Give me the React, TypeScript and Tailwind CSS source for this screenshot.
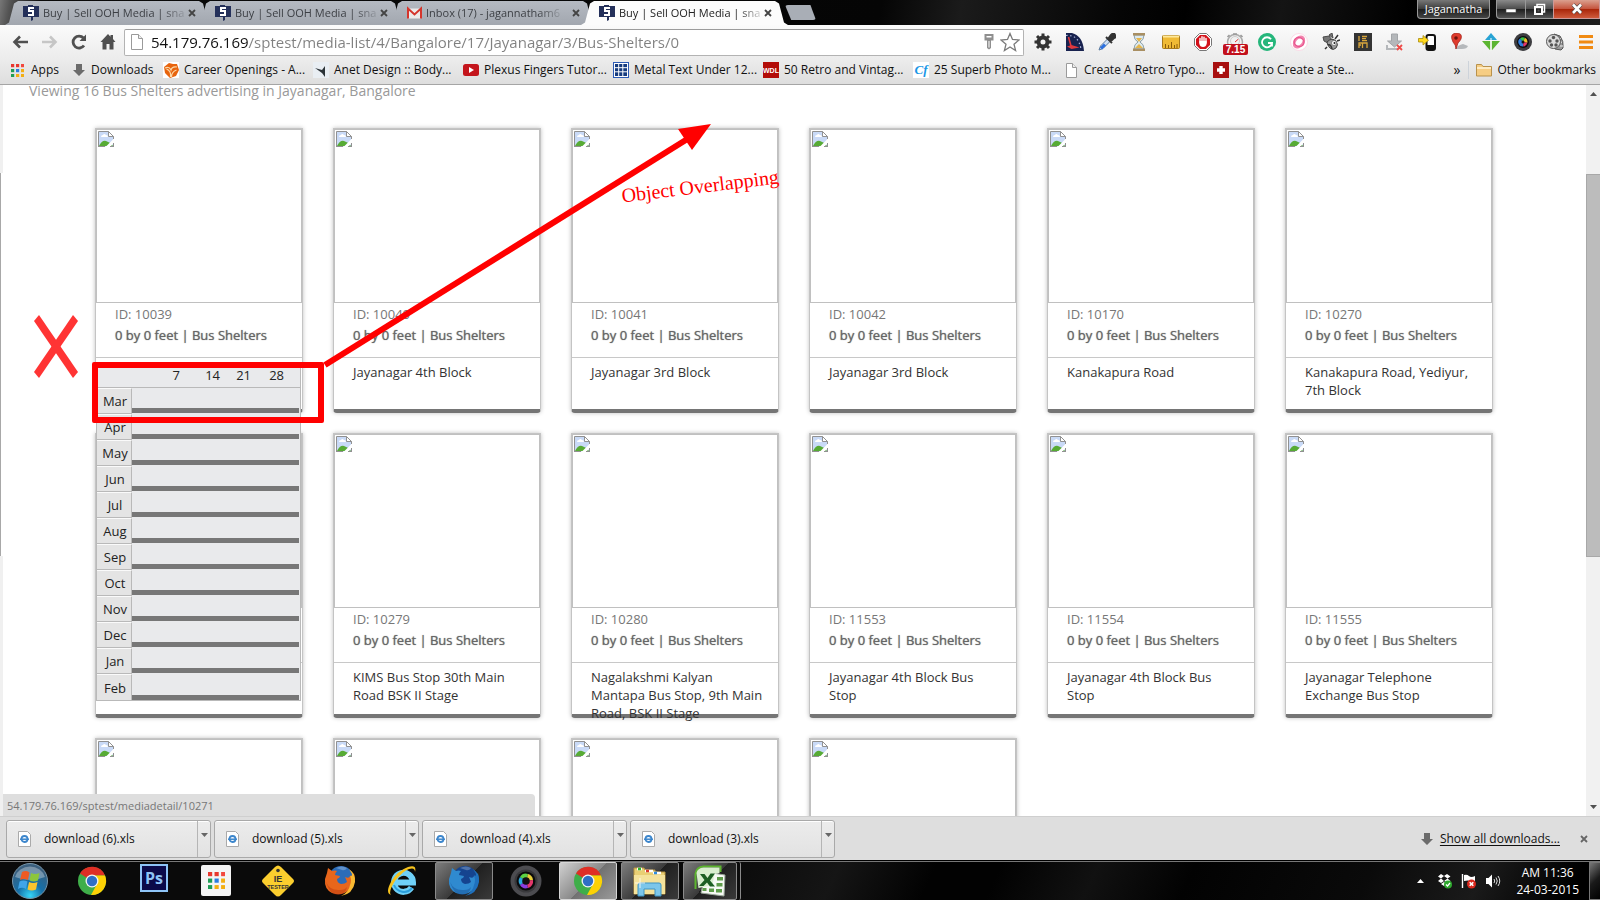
import React from "react";

type Box = { children: React.ReactNode; size?: number; view?: string; className?: string };

function Svg({ children, size = 18, view = "0 0 18 18", className = "" }: Box) {
  return (
    <svg width={size} height={size} viewBox={view} className={`block shrink-0 ${className}`} aria-hidden="true">
      {children}
    </svg>
  );
}

/* ---------- Browser tabs ---------- */

function SiteIcon() {
  return (
    <Svg size={16} view="0 0 16 16">
      <path d="M0 1h5v-1h5v1h6v11h-6v3l-2 1v-4H0z" fill="#24305a" />
      <path d="M11 3H6v3h4v4H5" fill="none" stroke="#fff" strokeWidth="2" />
    </Svg>
  );
}

function GmailIcon() {
  return (
    <Svg size={15} view="0 0 15 12">
      <path d="M1 1h13v10H1z" fill="#eceaea" />
      <path d="M1 11V1l6.5 6L14 1v10" fill="none" stroke="#d5352c" strokeWidth="2" />
    </Svg>
  );
}

const tabs = [
  { title: "Buy | Sell OOH Media | sna", icon: "site", active: false },
  { title: "Buy | Sell OOH Media | sna", icon: "site", active: false },
  { title: "Inbox (17) - jagannatham6", icon: "mail", active: false },
  { title: "Buy | Sell OOH Media | sna", icon: "site", active: true },
];

function CloseX({ color = "#444" }: { color?: string }) {
  return (
    <Svg size={8} view="0 0 8 8">
      <path d="M1 1l6 6M7 1L1 7" stroke={color} strokeWidth="1.8" />
    </Svg>
  );
}

function TabStrip() {
  return (
    <header className="flex h-[25px] shrink-0 items-end bg-[linear-gradient(100deg,#777_0,#555_10px,#0a0a0a_40px,#050505_55%,#1b1b1b_60%,#050505_70%,#000_74%,#141414_80%,#000_88%,#1c1c1c_100%)] pl-[5px]">
      {tabs.map((t, i) => (
        <div
          key={i}
          className={
            "-mr-[15px] flex h-[24px] w-[207px] items-center pr-[16px] pl-[18px] [clip-path:polygon(0_100%,4px_90%,9px_10%,13px_0,194px_0,198px_10%,203px_90%,100%_100%)] " +
            (t.active ? "z-10 bg-[#fcfcfc]" : "bg-[linear-gradient(#b5bac2,#a2a7af)]")
          }
        >
          {t.icon === "site" ? <SiteIcon /> : <GmailIcon />}
          <span
            className={
              "ml-[4px] text-[11px] leading-4 whitespace-nowrap [mask-image:linear-gradient(90deg,#000_84%,rgba(0,0,0,0.2)_100%)] " +
              (t.active ? "text-[#222]" : "text-[#3c3f44]")
            }
          >
            {t.title}
          </span>
          <button aria-label="Close tab" className="ml-auto">
            <CloseX />
          </button>
        </div>
      ))}
      <button
        aria-label="New tab"
        className="mb-[5px] ml-[12px] h-[15px] w-[31px] rounded-[3px] bg-[#a9aeb6] [clip-path:polygon(0_0,82%_0,100%_100%,20%_100%)]"
      />
      <div className="ml-auto flex h-[19px] self-start">
        <button className="mr-[6px] w-[73px] rounded-b-[4px] border border-t-0 border-[#999] bg-[linear-gradient(#777,#3a3a3a_50%,#1c1c1c_50%,#444)] text-[11px] leading-4 text-white">
          Jagannatha
        </button>
        <button
          aria-label="Minimise"
          className="flex w-[30px] items-center justify-center rounded-bl-[4px] border border-t-0 border-[#999] bg-[linear-gradient(#8a8a8a,#4a4a4a_50%,#1c1c1c_50%,#555)]"
        >
          <Svg size={12} view="0 0 12 12">
            <path d="M1 6h10v3.5H1z" fill="#fff" stroke="#444" strokeWidth=".6" />
          </Svg>
        </button>
        <button
          aria-label="Restore"
          className="flex w-[27px] items-center justify-center border-b border-[#999] bg-[linear-gradient(#8a8a8a,#4a4a4a_50%,#1c1c1c_50%,#555)]"
        >
          <Svg size={13} view="0 0 13 13">
            <path d="M4 3V1.5h7.5V9H10" fill="none" stroke="#fff" strokeWidth="1.5" />
            <path d="M2 4h7v7H2z" fill="none" stroke="#fff" strokeWidth="2" />
            <path d="M4.500 6.500h2v2h-2z" fill="#555" />
          </Svg>
        </button>
        <button
          aria-label="Close"
          className="flex w-[47px] items-center justify-center border border-t-0 border-[#c99] bg-[linear-gradient(#dba08f,#c4523b_50%,#a82408_50%,#cf5a3c)]"
        >
          <Svg size={12} view="0 0 12 12">
            <path d="M2 1.500l8 8.500M10 1.500L2 10" stroke="#444" strokeWidth="4" />
            <path d="M2 1.500l8 8.500M10 1.500L2 10" stroke="#fff" strokeWidth="2.600" />
          </Svg>
        </button>
      </div>
    </header>
  );
}

/* ---------- Toolbar ---------- */

const extensions: { name: string; art: React.ReactNode }[] = [
  {
    name: "Settings",
    art: (
      <>
        <circle cx="9" cy="9" r="4.500" fill="none" stroke="#333" strokeWidth="4" />
        <path d="M9 0.500v3M9 14.500v3M0.500 9h3M14.500 9h3M3 3l2 2M13 13l2 2M3 15l2-2M13 5l2-2" stroke="#333" strokeWidth="3" />
      </>
    ),
  },
  {
    name: "Page speed",
    art: (
      <>
        <path d="M0 0h6q11 3 12 18H0z" fill="#18224f" />
        <path d="M0 2.500q13-1 15 14" fill="none" stroke="#aeb8dd" strokeWidth="1.200" strokeDasharray="1.500 2.500" />
        <path d="M2.500 4L5 13" stroke="#e0393e" strokeWidth="1.600" />
        <path d="M1 13.500l4.500-1.500 8 2.500-8 1.500z" fill="#e0393e" />
      </>
    ),
  },
  {
    name: "Eyedropper",
    art: (
      <>
        <path d="M1 17l1.500-4 7-7 2.500 2.500-7 7z" fill="#cfe0f4" stroke="#56789f" />
        <path d="M3 15.500l4-4" stroke="#2b6fe0" strokeWidth="3" />
        <path d="M8 4l6 6M10 6l3-4q3-3 4 0t-1 3l-3 3z" fill="#333" stroke="#333" strokeWidth="2" />
      </>
    ),
  },
  {
    name: "Hourglass",
    art: (
      <>
        <path d="M4 2h10q0 5-4 7 4 2 4 7H4q0-5 4-7-4-2-4-7z" fill="#dce9ee" stroke="#8da0a8" />
        <path d="M6 5h6l-3 4zM5 15l4-4 4 4z" fill="#e5b54a" />
        <path d="M3 0h12v2.500H3zM3 15.500h12V18H3z" fill="#a98f62" />
      </>
    ),
  },
  {
    name: "Ruler",
    art: (
      <>
        <rect x="0.500" y="2.500" width="17" height="13" rx="1" fill="#efba35" stroke="#a77a1c" />
        <path d="M1 3.500h16" stroke="#ffe89a" strokeWidth="2" />
        <path d="M3.500 15v-4M6.500 15v-3M9.500 15V9M12.500 15v-3M15 15v-4" stroke="#8c5e0c" />
      </>
    ),
  },
  {
    name: "Blocker",
    art: (
      <>
        <path d="M5.500 0.500h7l5 5v7l-5 5h-7l-5-5v-7z" fill="#fff" stroke="#777" />
        <path d="M6 2h6l4 4v6l-4 4H6l-4-4V6z" fill="#d3121b" />
        <path d="M6 10V5.500M8 9V3.800M10 9V4.200M12 10V5.500" stroke="#fff" strokeWidth="1.400" strokeLinecap="round" />
        <path d="M5.400 8h7.200v3q-.5 3-3.600 3T5.400 11z" fill="#fff" />
      </>
    ),
  },
  {
    name: "Load timer",
    art: (
      <>
        <circle cx="9" cy="9" r="7.500" fill="#f1f1f1" stroke="#aaa" strokeWidth="1.500" />
        <path d="M7 1h4M1.500 4l2-2M16.500 4l-2-2" stroke="#999" strokeWidth="1.600" />
        <path d="M9 9l3.500-3" stroke="#d33" />
        <circle cx="9" cy="8" r="4.500" fill="none" stroke="#ccc" />
      </>
    ),
  },
  {
    name: "Grammar",
    art: (
      <>
        <circle cx="9" cy="9" r="9" fill="#25b67b" />
        <path d="M13 6.200A5 5 0 1 0 14 10h-4M14 10v3.500" fill="none" stroke="#fff" strokeWidth="1.800" />
      </>
    ),
  },
  {
    name: "Petal",
    art: (
      <>
        <circle cx="9" cy="9" r="8.500" fill="#fff" stroke="#fbdbe7" />
        <ellipse cx="9" cy="9" rx="6" ry="4" fill="none" stroke="#f283ad" strokeWidth="2.500" transform="rotate(-50 9 9)" />
        <ellipse cx="9" cy="9" rx="5" ry="4.500" fill="none" stroke="#e9568f" strokeWidth="1.300" transform="rotate(20 9 9)" />
      </>
    ),
  },
  {
    name: "Firebug",
    art: (
      <>
        <path d="M1 4l6-1 3 4-4 3-4-2zM7 2l3-2 1 5z" fill="#777" stroke="#4a4a4a" />
        <path d="M5 9q5-5 9-1 3 4 0 7t-6 0q-3-3-3-6z" fill="#9a9a9a" stroke="#444" />
        <path d="M6 12q3-1 4 4M5 14l-2 2M13 6l3-4M15 8l3-1" fill="none" stroke="#333" strokeWidth="1.500" />
        <circle cx="12" cy="10" r="2.600" fill="#f4f4f4" stroke="#555" strokeWidth=".6" />
        <circle cx="12.500" cy="10" r="1" fill="#222" />
      </>
    ),
  },
  {
    name: "Markup",
    art: (
      <>
        <rect width="18" height="18" fill="#343434" />
        <path d="M5 3v5M8 3.500h5M8 5.600h4M8 7.700h5M5 15v-5h3.500v5M8.500 10H13v5M5 12h2" fill="none" stroke="#d9a63c" strokeWidth="1.300" />
      </>
    ),
  },
  {
    name: "Download manager",
    art: (
      <>
        <path d="M5.500 1h6v7h4l-7 6-7-6h4z" fill="#b4b7ba" stroke="#a2a5a8" />
        <path d="M1 12v4h11" fill="none" stroke="#b4b7ba" strokeWidth="2" />
        <path d="M11 12l5 5M16 12l-5 5" stroke="#ee4b48" strokeWidth="1.800" />
      </>
    ),
  },
  {
    name: "Send to phone",
    art: (
      <>
        <rect x="8.500" y="2" width="8.500" height="15" rx="2" fill="#fff" stroke="#111" strokeWidth="2" />
        <path d="M9 12h8v4H9z" fill="#111" />
        <path d="M.5 5.500H5v-3l5.500 4.800L5 12V9H.5z" fill="#ffd91c" stroke="#a98b0a" strokeWidth=".8" />
      </>
    ),
  },
  {
    name: "Map pin",
    art: (
      <>
        <path d="M5 16q3-4 8-5l5 2q-1 3-6 3z" fill="#b5b8bb" />
        <path d="M6 16q0-4-3-7-4-8 3-9 7 0 5 6-1 2-3 4-1 3-2 6z" fill="#df3b2d" stroke="#9e2118" strokeWidth=".7" />
        <circle cx="6" cy="5" r="1.800" fill="#6d130d" />
      </>
    ),
  },
  {
    name: "Feather",
    art: (
      <>
        <path d="M9 0l6 7H3z" fill="#28a3d4" />
        <path d="M0 8h8.300v9.500zM18 8H9.700v9.500z" fill="#5cb531" />
        <path d="M8.500 5h1v13h-1z" fill="#fff" />
      </>
    ),
  },
  {
    name: "Lens",
    art: (
      <>
        <circle cx="9" cy="9" r="9" fill="#3d3d40" />
        <circle cx="9" cy="9" r="6" fill="#0c0c0e" />
        <path d="M9 9L6 5.500a4.500 4.500 0 0 1 5-.8z" fill="#37c24a" />
        <path d="M9 9l2-4.300a4.500 4.500 0 0 1 2.300 5z" fill="#f1bd26" />
        <path d="M9 9l4.300.8a4.500 4.500 0 0 1-4 3.700z" fill="#e3356c" />
        <path d="M9 9l.2 4.500A4.500 4.500 0 0 1 6 5.500z" fill="#2f7fe0" />
        <circle cx="9" cy="9" r="1.500" fill="#111" />
      </>
    ),
  },
  {
    name: "Film",
    art: (
      <>
        <path d="M8 1l6 2q4 5 3 12l-2 2-6-1z" fill="#999" stroke="#555" />
        <path d="M15 5l-2 2M16 9l-2 1M17 13l-3 0" stroke="#eee" />
        <circle cx="7.500" cy="8.500" r="7" fill="#dcdcdc" stroke="#555" />
        <circle cx="7.500" cy="4.500" r="1.700" fill="#555" />
        <circle cx="4" cy="8" r="1.700" fill="#555" />
        <circle cx="11" cy="8" r="1.700" fill="#555" />
        <circle cx="5.500" cy="12" r="1.700" fill="#555" />
        <circle cx="10" cy="12" r="1.700" fill="#555" />
      </>
    ),
  },
];

function PageIcon() {
  return (
    <Svg size={16} view="0 0 16 16">
      <path d="M2.500.5h7l4 4v11h-11z" fill="#fff" stroke="#9a9a9a" />
      <path d="M9.500.5v4h4" fill="#eee" stroke="#9a9a9a" />
    </Svg>
  );
}

function Toolbar() {
  return (
    <div className="flex h-[34px] shrink-0 items-center bg-[linear-gradient(#fbfbfb,#ececec)] pl-[11px]">
      <div className="flex items-center gap-[9px]">
        <button aria-label="Back" className="w-5">
          <Svg size={20} view="0 0 20 20">
            <path d="M17 10H4M9 4.500L3.500 10 9 15.500" fill="none" stroke="#505050" strokeWidth="2.600" />
          </Svg>
        </button>
        <button aria-label="Forward" className="w-5">
          <Svg size={20} view="0 0 20 20">
            <path d="M2 10h13M10 4.500l5.500 5.500-5.500 5.500" fill="none" stroke="#c6c6c6" strokeWidth="2.600" />
          </Svg>
        </button>
        <button aria-label="Reload" className="w-5">
          <Svg size={20} view="0 0 20 20">
            <path d="M15 13.500A6 6 0 1 1 14.500 6" fill="none" stroke="#505050" strokeWidth="2.800" />
            <path d="M17 2.500V9h-6.500z" fill="#505050" />
          </Svg>
        </button>
        <button aria-label="Home" className="w-5">
          <Svg size={20} view="0 0 20 20">
            <path d="M10 2L2.500 10h2v7.500h4V12h3v5.500h4V10h2L15 7V3h-2.500v1.700z" fill="#505050" />
          </Svg>
        </button>
      </div>
      <div className="ml-[6px] flex h-[27px] min-w-0 flex-1 items-center rounded-[2px] border border-[#b3b3b3] border-t-[#9c9c9c] bg-white pl-[4px]">
        <PageIcon />
        <input
          aria-label="Address"
          defaultValue="54.179.76.169/sptest/media-list/4/Bangalore/17/Jayanagar/3/Bus-Shelters/0"
          className="ml-[6px] min-w-0 flex-1 bg-[linear-gradient(90deg,#111_98px,#808080_98px)] bg-clip-text text-[15px] leading-6 text-transparent outline-none"
        />
        <Svg size={16} view="0 0 16 16">
          <path d="M3.500 0h9v6.500H10V14l-2 1.500L6 14V6.500H3.500z" fill="#8f8f8f" />
          <path d="M5.500 2h5v1.500h-5z" fill="#fff" />
          <path d="M8 7v6.500" stroke="#fff" />
        </Svg>
        <button aria-label="Bookmark this page" className="mx-[3px]">
          <Svg size={20} view="0 0 20 20">
            <path d="M10 1.500l2.500 6 6.500.5-5 4.200 1.600 6.300L10 15l-5.600 3.500L6 12.200 1 8l6.500-.5z" fill="#fff" stroke="#7b7b7b" strokeWidth="1.300" />
          </Svg>
        </button>
      </div>
      <div className="ml-[3px] flex">
        {extensions.map((e) => (
          <button key={e.name} aria-label={e.name} className="relative flex h-6 w-8 items-center justify-center">
            <Svg>{e.art}</Svg>
            {e.name === "Load timer" && (
              <span className="absolute top-[14px] left-[4px] h-[11px] w-[25px] rounded-[2px] bg-[#c2101c] text-center font-['Liberation_Sans'] text-[10px] leading-[11px] font-bold text-white">
                7.15
              </span>
            )}
          </button>
        ))}
      </div>
      <button aria-label="Menu" className="flex w-[29px] justify-center">
        <Svg size={14} view="0 0 14 14">
          <path d="M0 0h14v3H0zM0 5.500h14v3H0zM0 11h14v3H0z" fill="#f08a12" />
        </Svg>
      </button>
    </div>
  );
}

/* ---------- Bookmarks ---------- */

function AppsIcon({ size = 13 }: { size?: number }) {
  const colors = ["#e8382f", "#e8382f", "#f2483d", "#1f9d55", "#2a7de1", "#f3ae12", "#1f9d55", "#f3ae12", "#f3ae12"];
  return (
    <Svg size={size} view="0 0 13 13">
      {colors.map((c, i) => (
        <rect key={i} x={(i % 3) * 5} y={Math.floor(i / 3) * 5} width="3.200" height="3.200" fill={c} />
      ))}
    </Svg>
  );
}

function DownArrow() {
  return (
    <Svg size={12} view="0 0 12 12">
      <path d="M3 0h6v6h3l-6 6-6-6h3z" fill="#6b6b6b" />
    </Svg>
  );
}

const bookmarks: { label: string; art: React.ReactNode }[] = [
  {
    label: "Career Openings - A...",
    art: (
      <>
        <rect width="16" height="16" fill="#fff" />
        <path d="M1 5l5-4 4 1 4 0 2 6-3 6-6 2-5-5z" fill="#e8640e" />
        <path d="M2 6q4-2 6 2 1-4 6-3M7.500 15q1-6-4-8M8.500 15q0-5 5-7" fill="none" stroke="#fbd9a8" strokeWidth="1.200" />
      </>
    ),
  },
  {
    label: "Anet Design :: Body...",
    art: (
      <>
        <rect width="16" height="16" fill="#e9eef3" />
        <path d="M2 6l7 2 3-4v11l-3-4z" fill="#2c3338" />
      </>
    ),
  },
  {
    label: "Plexus Fingers Tutor...",
    art: (
      <>
        <rect y="2" width="16" height="12" rx="2.500" fill="#c4151c" />
        <path d="M6 5l5 3-5 3z" fill="#fff" />
      </>
    ),
  },
  {
    label: "Metal Text Under 12...",
    art: (
      <>
        <rect x=".5" y=".5" width="15" height="15" fill="#fff" stroke="#2d5bb5" />
        <path d="M2 2h12v12H2z" fill="#163b7e" />
        <path d="M5.700 2v12M9.800 2v12M2 5.700h12M2 9.800h12" stroke="#fff" />
      </>
    ),
  },
  {
    label: "50 Retro and Vintag...",
    art: (
      <>
        <rect width="16" height="16" fill="#b30c08" />
        <text x="8" y="10.500" fontSize="7" fontWeight="bold" fontFamily="Liberation Sans, sans-serif" fill="#fff" textAnchor="middle">
          WDL
        </text>
      </>
    ),
  },
  {
    label: "25 Superb Photo M...",
    art: (
      <>
        <rect width="16" height="16" fill="#fff" />
        <text x="8" y="12" fontSize="13" fontWeight="bold" fontStyle="italic" fontFamily="Liberation Serif, serif" fill="#1a97e6" textAnchor="middle">
          Cf
        </text>
      </>
    ),
  },
  {
    label: "Create A Retro Typo...",
    art: (
      <>
        <path d="M3.500 1.500h6l4 4v10h-10z" fill="#fff" stroke="#9a9a9a" />
        <path d="M9.500 1.500v4h4" fill="#eee" stroke="#9a9a9a" />
      </>
    ),
  },
  {
    label: "How to Create a Ste...",
    art: (
      <>
        <rect width="16" height="16" fill="#a80f0f" />
        <path d="M6.300 4h3.400v2.300H12v3.400H9.700V12H6.300V9.700H4V6.300h2.300z" fill="#fff" />
      </>
    ),
  },
];

function BookmarkBar() {
  return (
    <nav className="flex h-[26px] shrink-0 items-center border-b border-[#a5a5a5] bg-[linear-gradient(#ececec,#dedede)] pr-[4px] pb-[3px] pl-[11px] text-[12px] text-[#111]">
      <a href="#apps" className="flex w-[62px] items-center gap-[7px]">
        <AppsIcon />
        Apps
      </a>
      <a href="#downloads" className="flex w-[90px] items-center gap-[6px]">
        <DownArrow />
        Downloads
      </a>
      {bookmarks.map((b) => (
        <a key={b.label} href="#bookmark" className="flex w-[150px] items-center gap-[5px] whitespace-nowrap">
          <Svg size={16} view="0 0 16 16">
            {b.art}
          </Svg>
          {b.label}
        </a>
      ))}
      <button aria-label="More bookmarks" className="mr-[8px] ml-auto text-[14px] leading-4">
        »
      </button>
      <a href="#other" className="flex items-center gap-[5px] border-l border-[#cdd3da] pl-[7px]">
        <Svg size={16} view="0 0 16 16">
          <path d="M.5 14V2.500h5l1.500 2h8.500V14z" fill="#f6cd83" stroke="#b9924c" />
          <path d="M1 6h14" stroke="#fdebc4" strokeWidth="2" />
        </Svg>
        Other bookmarks
      </a>
    </nav>
  );
}

/* ---------- Listing ---------- */

function BrokenImage() {
  return (
    <Svg size={16} view="0 0 16 16">
      <path d="M.5.500h10l5 5v10H.5z" fill="#c9daf7" />
      <path d="M1 15q3-6 7-5t7 5z" fill="#57ab35" />
      <path d="M3 6q0-2 2-2 1-2 3 0 2 0 2 2z" fill="#fff" />
      <path d="M16 7.500L7.500 16H12l4-4z" fill="#fff" />
      <path d="M.5 16V.500h10l5 5V8" fill="none" stroke="#919191" />
      <path d="M10.500.500v5h5z" fill="#fff" stroke="#919191" />
      <path d="M0 15.500h7M12 15.500h4M15.500 12v4" stroke="#919191" />
    </Svg>
  );
}

const media = [
  { id: "10039", place: "" },
  { id: "10040", place: "Jayanagar 4th Block" },
  { id: "10041", place: "Jayanagar 3rd Block" },
  { id: "10042", place: "Jayanagar 3rd Block" },
  { id: "10170", place: "Kanakapura Road" },
  { id: "10270", place: "Kanakapura Road, Yediyur, 7th Block" },
  { id: "", place: "" },
  { id: "10279", place: "KIMS Bus Stop 30th Main Road BSK II Stage" },
  { id: "10280", place: "Nagalakshmi Kalyan Mantapa Bus Stop, 9th Main Road, BSK II Stage" },
  { id: "11553", place: "Jayanagar 4th Block Bus Stop" },
  { id: "11554", place: "Jayanagar 4th Block Bus Stop" },
  { id: "11555", place: "Jayanagar Telephone Exchange Bus Stop" },
  { id: "", place: "" },
  { id: "", place: "" },
  { id: "", place: "" },
  { id: "", place: "" },
];

const months = ["Mar", "Apr", "May", "Jun", "Jul", "Aug", "Sep", "Oct", "Nov", "Dec", "Jan", "Feb"];

function Availability() {
  return (
    <table className="absolute top-[236px] left-0 z-10 w-[205px] table-fixed border-separate border-spacing-0 border border-[#b9b9b9] bg-[#e9eaec] text-[13px] text-[#222]">
      <thead>
        <tr className="h-[22px] leading-[18px]">
          <th className="w-[35px] border-b border-[#b9b9b9] p-0" />
          <th className="w-[48px] border-b border-[#b9b9b9] p-0 pb-[3px] text-right font-normal">7</th>
          <th className="w-[40px] border-b border-[#b9b9b9] p-0 pb-[3px] text-right font-normal">14</th>
          <th className="w-[31px] border-b border-[#b9b9b9] p-0 pb-[3px] text-right font-normal">21</th>
          <th className="w-[33px] border-b border-[#b9b9b9] p-0 pb-[3px] text-right font-normal">28</th>
          <th className="border-b border-[#b9b9b9] p-0" />
        </tr>
      </thead>
      <tbody>
        {months.map((m, i) => (
          <tr key={m} className="h-[26px]">
            <th
              className={
                "border-t border-r border-t-[#fafafa] border-r-[#b9b9b9] bg-[#e4e4e4] p-0 pl-[2px] text-center leading-[24px] font-normal " +
                (i < months.length - 1 ? "border-b border-b-[#b9b9b9]" : "")
              }
            >
              {m}
            </th>
            <td colSpan={5} className="p-0 pr-px align-bottom">
              <div className={"h-[5px] bg-[#777] " + (i < months.length - 1 ? "mb-px" : "")} />
            </td>
          </tr>
        ))}
      </tbody>
    </table>
  );
}

function MediaCard({ id, place, open }: { id: string; place: string; open?: boolean }) {
  return (
    <article className="relative min-w-0 rounded-b-[4px] border border-b-4 border-[#c4c4c4] border-b-[#757575] bg-white shadow-[0_0_4px_rgba(0,0,0,0.25)]">
      <a href="#media" aria-label="Media photo" className="block h-[174px] border border-[#c0c0c0] p-px">
        <BrokenImage />
      </a>
      <div className="h-[55px] border-b border-[#c8c8c8] pt-px pl-[19px] text-[13px] leading-[21px] whitespace-nowrap text-[#777]">
        {id && (
          <>
            <p>ID: {id}</p>
            <p className="text-[#666] [text-shadow:0_0_1px_#777]">0 by 0 feet | Bus Shelters</p>
          </>
        )}
      </div>
      <p className="h-[51px] pt-[5px] pr-[14px] pl-[19px] text-[13px] leading-[18px] text-[#333]">{place}</p>
      {open && <Availability />}
    </article>
  );
}

function Annotations() {
  return (
    <>
      <svg
        width="720"
        height="300"
        viewBox="0 0 720 300"
        className="pointer-events-none absolute top-0 left-0 z-20"
        role="img"
        aria-label="Overlap marker"
      >
        <path d="M322 280L686 53" stroke="#f00" strokeWidth="6" />
        <path d="M708 39l-33 5 14 21z" fill="#f00" />
        <path d="M31 236l5-6 39 57-5 6z" fill="#ff3434" />
        <path d="M75 236l-5-6-39 57 5 6z" fill="#ff3434" />
      </svg>
      <div className="pointer-events-none absolute top-[277px] left-[89px] z-20 h-[61px] w-[232px] rounded-[2px] border-[6px] border-[#f00]" />
      <div className="pointer-events-none absolute top-[89px] left-[618px] z-20 origin-center rotate-[-7deg] font-['Liberation_Serif',serif] text-[20px] leading-6 whitespace-nowrap text-[#f00]">
        Object Overlapping
      </div>
    </>
  );
}

function Arrow({ up, color = "#505050" }: { up?: boolean; color?: string }) {
  return (
    <svg width="7" height="4" viewBox="0 0 7 4" aria-hidden="true">
      <path d={up ? "M0 4L3.500 0 7 4z" : "M0 0h7L3.500 4z"} fill={color} />
    </svg>
  );
}

function Viewport() {
  return (
    <div className="flex min-h-0 flex-1">
      <div className="flex w-[3px] shrink-0 flex-col bg-[#f0f0f0]">
        <div className="mt-[88px] h-[383px] border-l border-[#a8a8a8] bg-white" />
      </div>
      <main className="relative min-w-0 flex-1 overflow-hidden bg-white">
        <h1 className="pl-[26px] text-[14px] leading-[12px] text-[#999]">
          Viewing 16 Bus Shelters advertising in Jayanagar, Bangalore
        </h1>
        <div className="mt-[31px] grid grid-cols-6 gap-x-[30px] gap-y-[20px] pr-[93px] pl-[92px]">
          {media.map((m, i) => (
            <MediaCard key={i} id={m.id} place={m.place} open={i === 0} />
          ))}
        </div>
        <Annotations />
        <div className="absolute bottom-0 left-0 z-20 h-[22px] w-[532px] rounded-tr-[4px] bg-[#dedede] pl-[4px] text-[11px] leading-6 text-[#777]">
          54.179.76.169/sptest/mediadetail/10271
        </div>
      </main>
      <div className="flex w-[14px] shrink-0 flex-col items-center bg-[#f1f1f1] pt-[7px] pb-[7px]">
        <Arrow up />
        <div className="mt-[78px] h-[383px] w-full border border-r-0 border-[#a8a8a8] bg-[#bcbcbc]" />
        <div className="mt-auto flex">
          <Arrow />
        </div>
      </div>
    </div>
  );
}

/* ---------- Downloads ---------- */

function DownloadShelf() {
  return (
    <footer className="flex h-[44px] shrink-0 items-center gap-[3px] border-t border-[#cfcfcf] bg-[#dedede] pl-[6px] text-[12px] text-[#111]">
      {[6, 5, 4, 3].map((n) => (
        <div key={n} className="flex h-[38px] w-[205px] rounded-[3px] border border-[#a9a9a9] bg-[linear-gradient(#ececec,#e2e2e2)] shadow-[inset_0_1px_0_#fff]">
          <button className="flex flex-1 items-center gap-[11px] pl-[10px]">
            <Svg size={16} view="0 0 16 16">
              <path d="M1.500.500h9l3 3v12h-12z" fill="#fff" stroke="#aaa" />
              <circle cx="7.500" cy="8" r="3" fill="none" stroke="#3c86cc" strokeWidth="1.800" />
              <path d="M3 8.200h9" stroke="#3c86cc" strokeWidth="1.500" />
            </Svg>
            download ({n}).xls
          </button>
          <button aria-label="File options" className="flex w-[13px] justify-center border-l border-[#b5b5b5] pt-[12px]">
            <Arrow color="#666" />
          </button>
        </div>
      ))}
      <div className="ml-auto flex items-center pr-[12px]">
        <DownArrow />
        <a href="#all" className="ml-[7px] underline underline-offset-2">
          Show all downloads...
        </a>
        <button aria-label="Close downloads" className="ml-[20px]">
          <CloseX color="#666" />
        </button>
      </div>
    </footer>
  );
}

/* ---------- Taskbar ---------- */

function Chrome() {
  return (
    <Svg size={30} view="0 0 30 30">
      <circle cx="15" cy="15" r="14" fill="#3fae49" />
      <path d="M15 15L3 7.500A14 14 0 0 1 28 9.500H15z" fill="#df2e25" />
      <path d="M15 9.500h13A14 14 0 0 1 14 29l6-11z" fill="#fdd105" />
      <circle cx="15" cy="15" r="6.500" fill="#f4f4f4" />
      <circle cx="15" cy="15" r="5.200" fill="#2f6fc4" />
    </Svg>
  );
}

function Firefox({ globe, fox, tail, shade }: { globe: string; fox: string; tail: string; shade: string }) {
  return (
    <Svg size={32} view="0 0 32 32">
      <circle cx="17" cy="13.500" r="12.500" fill={globe} />
      <path d="M12 3q6-3 11 0-2 3-5 2t-6-2z" fill="#fff" opacity=".25" />
      <path
        d="M3 8l1-5 4 3q3-1 5 0-2 2-2 4l5 1q0 2-3 3 0 4 4 5 4 0 6-2-1-3-2-5 5 2 5-2 1 3 4-2 2 9-4 16-8 8-18 4Q0 24 1 14z"
        fill={fox}
      />
      <path d="M25 4q7 5 6 13-2 12-14 14 8-4 9-11 2-5 0-9 2 1 2-2z" fill={tail} />
      <path d="M2 17q4 9 14 8 5 0 7-3-1 7-9 8-8 0-12-13z" fill={shade} opacity=".35" />
    </Svg>
  );
}

function Camera() {
  return (
    <Svg size={32} view="0 0 32 32">
      <circle cx="16" cy="16" r="15.500" fill="#4c4c50" />
      <circle cx="16" cy="16" r="11.500" fill="#39393c" />
      <circle cx="16" cy="16" r="9.500" fill="#0b0b0c" />
      <path d="M16 16l-6-4a7 7 0 0 1 8-3z" fill="#5bd143" />
      <path d="M16 16l2-7a7 7 0 0 1 5 6z" fill="#e8cf3a" />
      <path d="M16 16l7-1a7 7 0 0 1-5 8z" fill="#e3386b" />
      <path d="M16 16l2 7a7 7 0 0 1-8-3z" fill="#8a3de0" />
      <path d="M16 16l-6 4a7 7 0 0 1 0-8z" fill="#29a9e0" />
      <circle cx="16" cy="16" r="3.800" fill="#111" />
    </Svg>
  );
}

function StartOrb() {
  return (
    <Svg size={38} view="0 0 38 38">
      <defs>
        <radialGradient id="orb" cx="50%" cy="92%" r="80%">
          <stop offset="0" stopColor="#35d6f8" />
          <stop offset=".45" stopColor="#1670a8" />
          <stop offset="1" stopColor="#3a5f7e" />
        </radialGradient>
      </defs>
      <circle cx="19" cy="19" r="17.500" fill="url(#orb)" stroke="#7896aa" />
      <path d="M4 15a15.500 14 0 0 1 30 0q-15 6-30 0z" fill="#fff" opacity=".32" />
      <path d="M11 10q4-2 7.500.5L17 18q-4-2-8 0z" fill="#ee5a24" />
      <path d="M20 11q4 2 8.500 0L27 18.500q-4 2-8.500 0z" fill="#8cc63c" />
      <path d="M8.500 19.500q4-2 8 0L15 27q-4-2.500-8 0z" fill="#41a5e8" />
      <path d="M18 20q4 2 8.500 0L25 27.500q-4 2-8.500 0z" fill="#fbc52d" />
    </Svg>
  );
}

function InternetExplorer() {
  return (
    <Svg size={32} view="0 0 32 32">
      <path d="M25.500 22.500a9.500 9.500 0 1 1 1.500-5H10" fill="none" stroke="#6fd0f7" strokeWidth="6" />
      <path d="M26 23a10.500 10.500 0 0 1-18-3" fill="none" stroke="#2c9fdc" strokeWidth="2" />
      <path d="M5 30Q-1 28 5 17T22 2q9-3 7 5 0-5-6-3T9 16Q2 27 5 30z" fill="#f6c21c" />
    </Svg>
  );
}

function Explorer() {
  return (
    <Svg size={34} view="0 0 34 34">
      <path d="M1 9V4h10l1 2h10v2h10v22H1z" fill="#e9cf74" stroke="#b7933f" />
      <path d="M4 5h5M12 7h8M20 9h8" stroke="#fff" strokeWidth="2.500" />
      <path d="M5 5h3" stroke="#2fb52c" strokeWidth="2.500" />
      <path d="M13 7h3" stroke="#d8392b" strokeWidth="2.500" />
      <path d="M21 9h3" stroke="#2f8ee0" strokeWidth="2.500" />
      <path d="M1 11h31v19H1z" fill="#f4e29b" />
      <path d="M5 32V21q0-2 2-2h19q2 0 2 2v11h-6v-7H11v7z" fill="#7cc6ea" stroke="#3f94c4" />
      <path d="M7 14v10M2 19h10" stroke="#fff" opacity=".8" />
    </Svg>
  );
}

function Excel() {
  return (
    <Svg size={32} view="0 0 32 32">
      <path d="M12 7l19 3-1 21-23-3z" fill="#f7faf5" stroke="#9aa79a" />
      <path d="M23 12h6v3.500h-6zM22.500 18h6v3.500h-6zM22 24h6v3.500h-6zM15 23.500h5v3.500h-5zM8.500 23h4v3h-4z" fill="#5e9c4a" />
      <path d="M1.500 24V9q1-7 8-7.500h17V7" fill="none" stroke="#5cb52e" strokeWidth="2" />
      <path d="M2.500 8q1-5 7-5.500h16V8l-5 1-2 11-14 3z" fill="#d9efcf" />
      <path d="M6 9h4.500l3 4 3-4.500H21l-5 7 5 6h-5l-3-4-3.500 3.500H5l5.500-6z" fill="#1d5f23" />
    </Svg>
  );
}

function AppButton({ label, children, state = "idle" }: { label: string; children: React.ReactNode; state?: string }) {
  const look =
    state === "active"
      ? "border-[#d6d6d6] bg-[linear-gradient(135deg,#d0d0d0,#8a8a8a_50%,#707070_50%,#9a9a9a)]"
      : state === "running"
        ? "border-[#8a8a8a] bg-[linear-gradient(135deg,#7d7d7d,#3a3a3a_50%,#1f1f1f_50%,#3a3a3a)]"
        : "border-transparent";
  return (
    <button aria-label={label} className={"flex h-[38px] w-[58px] items-center justify-center rounded-[2px] border " + look}>
      {children}
    </button>
  );
}

function Taskbar() {
  return (
    <footer className="flex h-[40px] shrink-0 items-center border-t border-[#000] bg-[linear-gradient(115deg,#0a0a0a_0,#0a0a0a_45%,#151515_52%,#020202_58%,#020202_62%,#111_68%,#020202_74%,#0a0a0a_85%,#1a1a1a_92%,#000_98%)] shadow-[inset_0_1px_0_#777]">
      <div className="flex gap-[4px] pl-px">
        <AppButton label="Start">
          <StartOrb />
        </AppButton>
        <AppButton label="Chrome">
          <Chrome />
        </AppButton>
        <AppButton label="Photoshop">
          <span className="mb-[5px] h-[28px] w-[28px] border-2 border-[#8ec4f7] bg-[#0b0a4a] text-[16px] leading-[24px] font-bold text-[#8ec4f7]">
            Ps
          </span>
        </AppButton>
        <AppButton label="App launcher">
          <span className="flex h-[31px] w-[30px] items-center justify-center rounded-[2px] bg-[#f4f4f4]">
            <AppsIcon size={17} />
          </span>
        </AppButton>
        <AppButton label="IETester">
          <Svg size={32} view="0 0 32 32">
            <path d="M13 2q3-3 6 0l12 12q2 2 0 4L19 30q-3 3-6 0L1 18q-2-2 0-4z" fill="#fbce2e" />
            <circle cx="16" cy="5.500" r="1.800" fill="#333" />
            <text x="16" y="17" fontSize="9" fontWeight="bold" fontFamily="Liberation Sans, sans-serif" textAnchor="middle" fill="#333">
              IE
            </text>
            <text x="16" y="23.500" fontSize="5.500" fontWeight="bold" fontFamily="Liberation Sans, sans-serif" textAnchor="middle" fill="#333">
              TESTER
            </text>
          </Svg>
        </AppButton>
        <AppButton label="Firefox">
          <Firefox globe="#2b6cb8" fox="#e8661b" tail="#f9b932" shade="#a6240b" />
        </AppButton>
        <AppButton label="Internet Explorer">
          <InternetExplorer />
        </AppButton>
        <AppButton label="Firefox Developer Edition" state="running">
          <Firefox globe="#15448f" fox="#2f8ad0" tail="#1f70bd" shade="#0e3d80" />
        </AppButton>
        <AppButton label="Camera">
          <Camera />
        </AppButton>
        <AppButton label="Chrome window" state="active">
          <Chrome />
        </AppButton>
        <AppButton label="Explorer" state="running">
          <Explorer />
        </AppButton>
        <div className="flex rounded-[2px] border-r border-[#8a8a8a] pr-[3px]">
          <button
            aria-label="Excel"
            className="flex h-[38px] w-[54px] items-center justify-center rounded-[2px] border border-[#8a8a8a] bg-[linear-gradient(135deg,#7d7d7d,#3a3a3a_50%,#1f1f1f_50%,#3a3a3a)]"
          >
            <Excel />
          </button>
        </div>
      </div>
      <div className="ml-auto flex items-center text-white">
        <Arrow up color="#fff" />
        <Svg size={16} view="0 0 16 16" className="ml-[13px]">
          <path d="M4 1l3 2-3 2.500L1 3.500zM10 1l3.500 2.500-3 2L7 3zM4 5.500L7 8l-3 2-3-2zM10.500 5.500l3 2.500-3 2L7 8zM4 11l3-2 3 2-3 2z" fill="#fff" />
          <circle cx="11" cy="11.500" r="4" fill="#2fa82f" />
          <path d="M9 11.500l1.500 1.500L13 10" fill="none" stroke="#fff" strokeWidth="1.200" />
        </Svg>
        <Svg size={16} view="0 0 16 16" className="ml-[8px]">
          <path d="M1.500 1v14" stroke="#fff" strokeWidth="1.400" />
          <path d="M3 2q3-1 5 1t6 0v5q-3 1-5 0T3 8z" fill="#fff" />
          <circle cx="10.500" cy="11" r="4.500" fill="#d9271c" />
          <path d="M8.700 9.200l3.600 3.600M12.300 9.200l-3.600 3.600" stroke="#fff" strokeWidth="1.600" />
        </Svg>
        <Svg size={16} view="0 0 16 16" className="ml-[8px]">
          <path d="M1 5h2.500L7 1.500v13L3.500 11H1z" fill="#fff" />
          <path d="M9 6q1.500 2 0 4M11 4.500q2.500 3.500 0 7M13 3q3.500 5 0 10" fill="none" stroke="#ddd" />
        </Svg>
        <div className="mr-[10px] ml-[15px] flex flex-col items-center text-[12px] leading-[17px]">
          <span>AM 11:36</span>
          <span>24-03-2015</span>
        </div>
        <button aria-label="Show desktop" className="h-[38px] w-[11px] border border-r-0 border-[#777] bg-[linear-gradient(135deg,#777,#1a1a1a_50%,#000)]" />
      </div>
    </footer>
  );
}

export default function App() {
  return (
    <div className="flex h-screen w-full flex-col overflow-hidden bg-white font-['Open_Sans','Noto_Sans',sans-serif]">
      <TabStrip />
      <Toolbar />
      <BookmarkBar />
      <Viewport />
      <DownloadShelf />
      <Taskbar />
    </div>
  );
}
